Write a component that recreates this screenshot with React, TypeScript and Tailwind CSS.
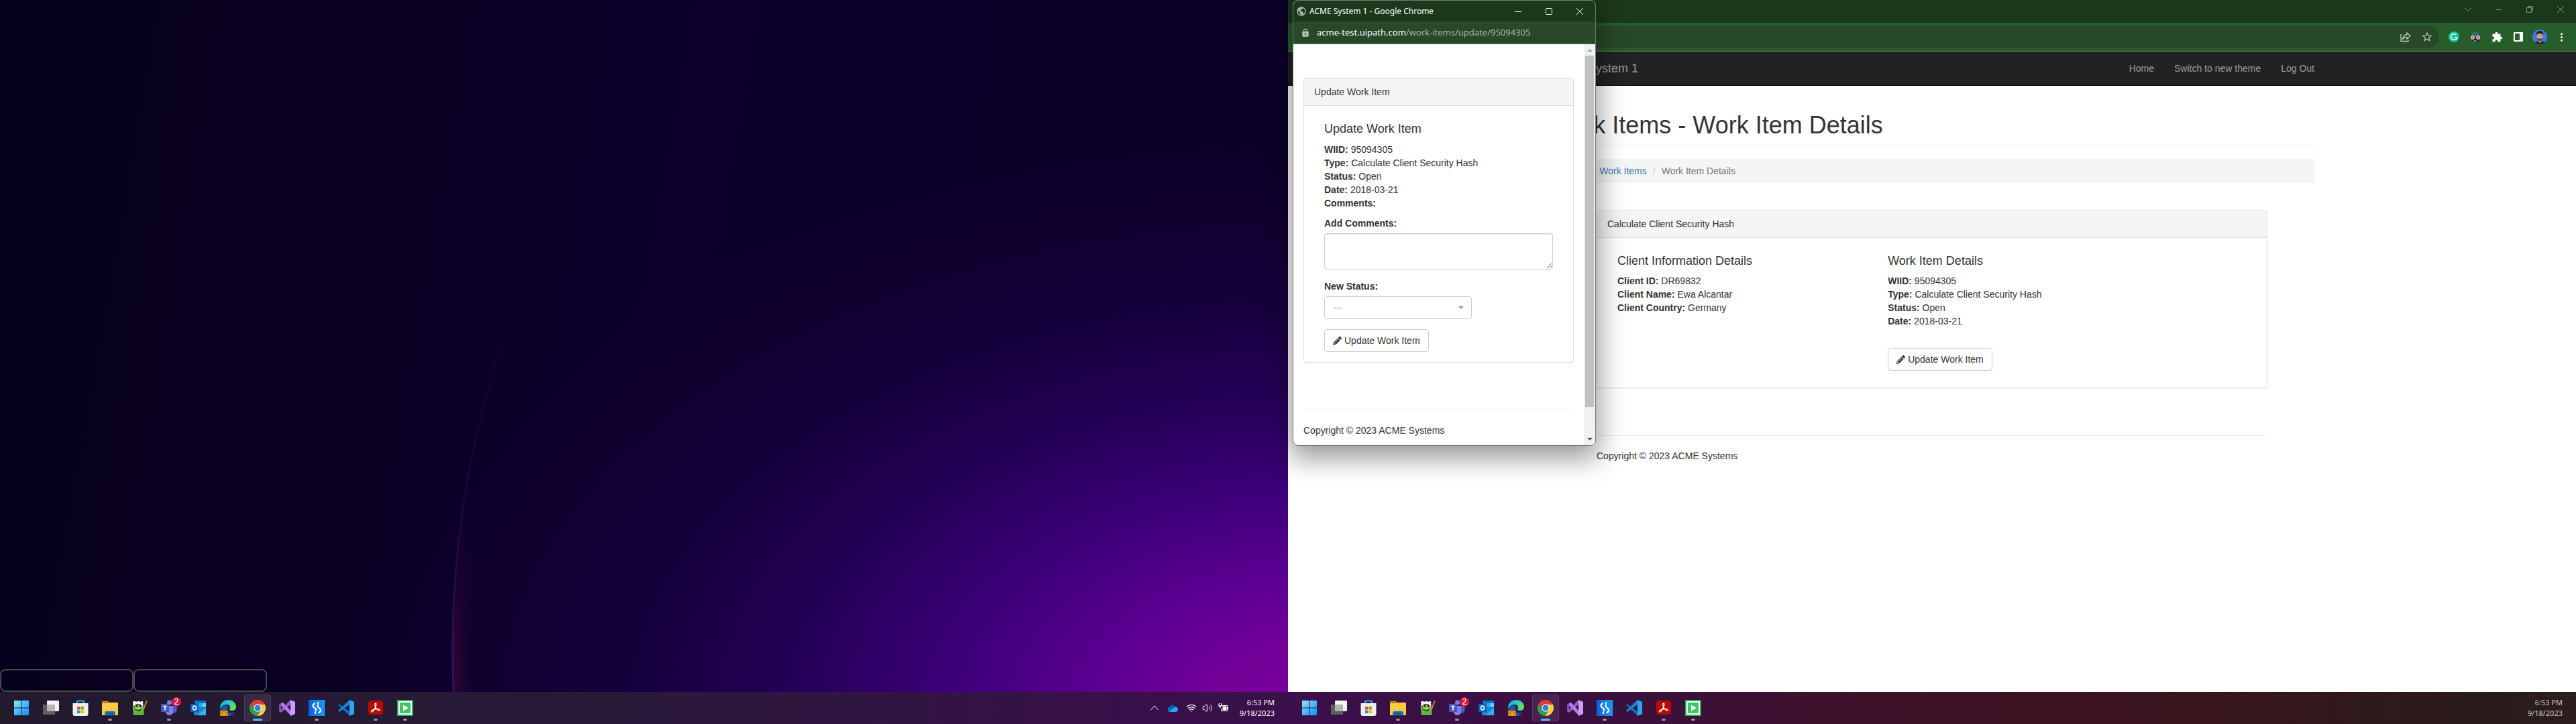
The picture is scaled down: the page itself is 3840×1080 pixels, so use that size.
import React from "react";
import { Volume2, Wifi } from "lucide-react";
import { MdExtension, MdLock, MdMoreVert, MdPublic, MdStarBorder } from "react-icons/md";
import { FaPencilAlt } from "react-icons/fa";

const UI = "font-['Noto_Sans',sans-serif]";

/* ---------- taskbar icons ---------- */

const StartIcon = () => (
  <svg viewBox="0 0 24 24" className="size-6">
    <defs>
      <linearGradient id="start" x1="0" y1="0" x2="1" y2="1">
        <stop offset="0" stopColor="#8ce4ff" />
        <stop offset="1" stopColor="#0a8ffb" />
      </linearGradient>
    </defs>
    <path fill="url(#start)" d="M1 1h10.500v10.500H1zM12.500 1H23v10.500H12.500zM1 12.500h10.500V23H1zM12.500 12.500H23V23H12.500z" />
  </svg>
);

const TaskViewIcon = () => (
  <svg viewBox="0 0 24 24" className="size-6">
    <rect x="6" y="1" width="18" height="16" rx="1" fill="#f4f4f4" />
    <rect x="0" y="7" width="18" height="15" rx="1" fill="#5f5f5f" />
    <rect x="6" y="7" width="12" height="10" fill="#b4b4b4" />
  </svg>
);

const StoreIcon = () => (
  <svg viewBox="0 0 24 24" className="size-6">
    <path d="M7 6V2.500A1 1 0 0 1 8 1.500h8a1 1 0 0 1 1 1V6" fill="none" stroke="#22b4f0" strokeWidth="2" />
    <path d="M.5 5h23v16a3 3 0 0 1-3 3h-17a3 3 0 0 1-3-3z" fill="#f0f0f0" />
    <path d="M7 10h4.500v4.500H7z" fill="#f25022" />
    <path d="M12.500 10H17v4.500h-4.500z" fill="#7fba00" />
    <path d="M7 15.500h4.500V20H7z" fill="#00a4ef" />
    <path d="M12.500 15.500H17V20h-4.500z" fill="#ffb900" />
  </svg>
);

const FolderIcon = () => (
  <svg viewBox="0 0 24 24" className="size-6">
    <path d="M0 3a1 1 0 0 1 1-1h8l2 2.500H0z" fill="#d9950c" />
    <path d="M0 5h9l1.500-1H23a1 1 0 0 1 1 1v17a1 1 0 0 1-1 1H1a1 1 0 0 1-1-1z" fill="#ffcb3d" />
    <path d="M4 19a2 2 0 0 1 2-2h12a2 2 0 0 1 2 2v4H4z" fill="#1277cb" />
    <path d="M7 20h10" stroke="#0b4f92" strokeWidth="1.500" />
  </svg>
);

const NotepadIcon = () => (
  <svg viewBox="0 0 24 24" className="size-6">
    <path d="M2 2h15l1 20H3z" fill="#f3f4ee" />
    <path d="M3 14l14-1 .6 8.500H3.500z" fill="#55c21e" />
    <ellipse cx="10" cy="11" rx="6" ry="4.500" fill="#8fd14a" stroke="#222" strokeWidth="1" />
    <circle cx="8" cy="9" r="1.500" fill="#222" />
    <circle cx="13" cy="9" r="1.500" fill="#222" />
    <path d="M7 15q4 3 7 0" stroke="#222" fill="none" />
    <path d="M23 1l-5 13" stroke="#c98a12" strokeWidth="2" />
    <path d="M3 2.500h14" stroke="#777" strokeDasharray="1 1" />
  </svg>
);

const TeamsIcon = () => (
  <svg viewBox="0 0 24 24" className="size-6">
    <circle cx="12.500" cy="4" r="3.500" fill="#7b83eb" />
    <circle cx="20" cy="6" r="2.500" fill="#5059c9" />
    <path d="M15 9h8.500v7a4.500 4.500 0 0 1-7 3z" fill="#5059c9" />
    <path d="M7 9h11v8.500a5.500 5.500 0 0 1-11 0z" fill="#7b83eb" />
    <rect x="0" y="6" width="12" height="12" rx="1" fill="#4b53bc" />
    <path d="M3 9.500h6M6 9.500v6" stroke="#fff" strokeWidth="1.700" />
  </svg>
);

const OutlookIcon = () => (
  <svg viewBox="0 0 24 24" className="size-6">
    <path d="M7 1h15a1 1 0 0 1 1 1v10H6V2a1 1 0 0 1 1-1z" fill="#1173c7" />
    <path d="M12 5h6v6h-6z" fill="#28a8ea" />
    <path d="M18 5h5v6h-5z" fill="#50d9ff" />
    <path d="M5 11l18 1v10a1 1 0 0 1-1 1H6a1 1 0 0 1-1-1z" fill="#1a86d6" />
    <path d="M23 12L10 23h12a1 1 0 0 0 1-1z" fill="#35b0ee" />
    <rect x="0" y="6" width="12" height="12" rx="1" fill="#0a64bd" />
    <ellipse cx="6" cy="12" rx="2.500" ry="3" fill="none" stroke="#fff" strokeWidth="1.600" />
  </svg>
);

const EdgeIcon = () => (
  <svg viewBox="0 0 24 24" className="size-6">
    <defs>
      <linearGradient id="edge" x1="0" y1="0" x2="1" y2=".5">
        <stop offset="0" stopColor="#1fa4e8" />
        <stop offset=".5" stopColor="#2bc3d2" />
        <stop offset="1" stopColor="#62e35a" />
      </linearGradient>
    </defs>
    <path d="M0 12c0 7 5 12 12 12 4 0 8-2 10-5-7 2-11-1-11-5 0-2 1-3 2-4C8 7 2 8 0 12z" fill="#0c59a4" />
    <path d="M0 12C0 5 5 0 12 0s12 5 12 10c0 4-3 6-6 6-3 0-4-1-4-2 0-1 1-1 1-3 0-2-2-4-5-4-5 0-9 3-10 6z" fill="url(#edge)" />
    <rect x="0" y="16" width="12" height="8" rx="1" fill="#e08a12" />
    <path d="M4 16v-1.500h4V16" stroke="#8a4d05" fill="none" />
    <path d="M0 19.500h12" stroke="#8a4d05" />
    <circle cx="6" cy="20" r="1.200" fill="#ffd36a" />
  </svg>
);

const ChromeIcon = () => (
  <svg viewBox="0 0 24 24" className="size-6">
    <path d="M12 6.500H22.670A12 12 0 0 1 11.430 24L16.760 14.750z" fill="#ffcd40" />
    <path d="M16.760 14.750L11.430 24A12 12 0 0 1 1.900 5.510L7.240 14.750z" fill="#2fa24c" />
    <path d="M7.240 14.750L1.900 5.510A12 12 0 0 1 22.670 6.500H12z" fill="#e33b2e" />
    <circle cx="12" cy="12" r="5.700" fill="#fff" />
    <circle cx="12" cy="12" r="4.500" fill="#2f7de9" />
  </svg>
);

const VisualStudioIcon = () => (
  <svg viewBox="0 0 24 24" className="size-6">
    <path d="M0 7l3-2v14l-3-2z" fill="#7a4fb0" />
    <path d="M17 0v7L3 19l-3-2z" fill="#8a5cc4" />
    <path d="M3 5l3-1 12 13v7L3 8.500z" fill="#b07be6" />
    <path d="M17 0l7 3v18l-7 3z" fill="#cf9bff" />
  </svg>
);

const StudioIcon = () => (
  <svg viewBox="0 0 24 24" className="size-6">
    <defs>
      <linearGradient id="studio">
        <stop offset="0" stopColor="#0a5fe0" />
        <stop offset="1" stopColor="#1a9cf0" />
      </linearGradient>
    </defs>
    <path d="M0 0h24v24H0z" fill="url(#studio)" />
    <path d="M9 5.500c-3.500 1.500-3 5 0 6.500 2.500 1.300 2.500 3 1.500 4.500" fill="none" stroke="#fff" strokeWidth="2.200" strokeLinecap="round" />
    <path d="M14 7.500c-1 1.500-1 3.200 1.500 4.500 3 1.500 3.500 5 0 7" fill="none" stroke="#fff" strokeWidth="2.200" strokeLinecap="round" />
    <circle cx="14" cy="4.500" r="1.400" fill="#fff" />
    <circle cx="10" cy="19.500" r="1.400" fill="#fff" />
  </svg>
);

const VsCodeIcon = () => (
  <svg viewBox="0 0 24 24" className="size-6">
    <path d="M0 8l2-1.500L18 18v6z" fill="#0a72bd" />
    <path d="M17 0v7L2 18l-2-2z" fill="#1586cf" />
    <path d="M17 0l7 3v18l-7 3z" fill="#2ba6f2" />
  </svg>
);

const AcrobatIcon = () => (
  <svg viewBox="0 0 24 24" className="size-6">
    <rect x="1" y="1" width="22" height="21" rx="4" fill="#b30b00" />
    <path
      d="M6 18c-2-1 2-4 6-4.500s7 .5 6 2-5-1-6.500-5-.5-5.500.5-5.500 1.500 3-1 7.500S7 18.500 6 18z"
      fill="none"
      stroke="#fff"
      strokeWidth="1.300"
    />
  </svg>
);

const AssistantIcon = () => (
  <svg viewBox="0 0 24 24" className="size-6">
    <path d="M0 0h24v24H0z" fill="#22b356" />
    <path d="M3 3h18v18H3z" fill="#3fc566" stroke="#fff" strokeWidth="2" />
    <path d="M9 7.500l8 4.500-8 4.500z" fill="#fff" />
  </svg>
);

type App = { name: string; icon: () => React.JSX.Element; open?: boolean; active?: boolean; badge?: string };

const apps: App[] = [
  { name: "Start", icon: StartIcon },
  { name: "Task View", icon: TaskViewIcon },
  { name: "Microsoft Store", icon: StoreIcon },
  { name: "File Explorer", icon: FolderIcon, open: true },
  { name: "Notepad++", icon: NotepadIcon },
  { name: "Teams", icon: TeamsIcon, open: true, badge: "2" },
  { name: "Outlook", icon: OutlookIcon },
  { name: "Edge", icon: EdgeIcon },
  { name: "Chrome", icon: ChromeIcon, active: true },
  { name: "Visual Studio", icon: VisualStudioIcon },
  { name: "UiPath Studio", icon: StudioIcon, open: true },
  { name: "Visual Studio Code", icon: VsCodeIcon },
  { name: "Acrobat Reader", icon: AcrobatIcon, open: true },
  { name: "UiPath Assistant", icon: AssistantIcon, open: true },
];

function TaskbarApps() {
  return (
    <div className="flex gap-1">
      {apps.map(({ name, icon: Icon, open, active, badge }) => (
        <button
          key={name}
          aria-label={name}
          className={`relative flex size-10 items-center justify-center rounded ${
            active ? "border border-white/10 bg-white/8" : ""
          }`}
        >
          <Icon />
          {open && <span className="absolute bottom-px h-[3px] w-[6px] rounded-full bg-[#9a96a0]" />}
          {active && <span className="absolute bottom-0 h-[3px] w-[14px] rounded-full bg-[#4cc2ff]" />}
          {badge && (
            <span
              className={`absolute top-1 right-0.5 flex size-[14px] items-center justify-center rounded-full bg-[#d81a3c] text-[12px] leading-none text-white ${UI}`}
            >
              {badge}
            </span>
          )}
        </button>
      ))}
    </div>
  );
}

function Clock({ className }: { className: string }) {
  return (
    <div className={`text-right text-[11px] leading-4 ${UI} ${className}`}>
      <div>6:53 PM</div>
      <div>9/18/2023</div>
    </div>
  );
}

/* ---------- left monitor ---------- */

function Desktop() {
  return (
    <section className="flex min-h-screen flex-col bg-[linear-gradient(100deg,#05001a_0%,#09001f_22%,#0c002c_50%,#0c0026_100%)]">
      <div className="relative flex flex-1 items-end bg-[radial-gradient(ellipse_76%_84%_at_103%_103%,#7c009c_0%,#740098_11%,#590090_25%,#3b0078_39%,#240056_55%,#17003e_70%,#100030_85%,transparent_100%)]">
        <svg
          viewBox="0 0 200 620"
          preserveAspectRatio="none"
          className="pointer-events-none absolute bottom-0 left-[34%] h-[60%] w-[12%]"
          aria-hidden="true"
        >
          <defs>
            <linearGradient id="ridge" x1="0" y1="0" x2="0" y2="1">
              <stop offset="0" stopColor="#2a1080" stopOpacity="0" />
              <stop offset=".6" stopColor="#24125c" stopOpacity=".5" />
              <stop offset="1" stopColor="#3a2068" stopOpacity=".8" />
            </linearGradient>
            <linearGradient id="glow" gradientUnits="userSpaceOnUse" x1="16" y1="0" x2="48" y2="0">
              <stop offset="0" stopColor="#3a0640" />
              <stop offset=".5" stopColor="#2c0432" stopOpacity=".7" />
              <stop offset="1" stopColor="#10004a" stopOpacity="0" />
            </linearGradient>
            <linearGradient id="fade" x1="0" y1="0" x2="0" y2="1">
              <stop offset=".45" stopColor="#000" />
              <stop offset="1" stopColor="#fff" />
            </linearGradient>
            <mask id="fadeMask">
              <rect width="200" height="620" fill="url(#fade)" />
            </mask>
          </defs>
          <path
            d="M20 620C12 420 40 220 112 0L112 0C62 220 44 420 50 620z"
            fill="url(#glow)"
            mask="url(#fadeMask)"
          />
          <path d="M20 620C12 420 40 220 112 0" fill="none" stroke="url(#ridge)" strokeWidth="2" />
        </svg>
        <div className="h-[34px] w-[199px] rounded-lg border-2 border-[#45474b]" />
        <div className="h-[34px] w-[199px] rounded-lg border-2 border-[#45474b]" />
      </div>
      <footer className="flex h-12 items-center justify-between bg-[linear-gradient(90deg,#231a2e,#281a38_45%,#3a104b_90%)] pr-5 pl-3">
        <TaskbarApps />
        <div className="flex items-center gap-3 text-white">
          <button aria-label="Show hidden icons">
            <svg viewBox="0 0 12 8" className="h-2 w-3" fill="none" stroke="currentColor">
              <path d="M.5 7L6 1l5.500 6" />
            </svg>
          </button>
          <svg viewBox="0 0 17 12" className="h-3 w-[17px]" role="img" aria-label="OneDrive">
            <path d="M4 12a4 4 0 0 1 0-7 5 5 0 0 1 9-.5A3.700 3.700 0 0 1 13.500 12z" fill="#0f78d4" />
            <path d="M1 6a4 4 0 0 1 3-1.500A5 5 0 0 1 13 4L6 9z" fill="#0a5cb0" />
            <path d="M4 12l6-6 4-1.200A3.700 3.700 0 0 1 13.500 12z" fill="#28a8ea" />
          </svg>
          <Wifi className="size-4" strokeWidth={2} />
          <Volume2 className="-mx-1 size-4" strokeWidth={1.5} />
          <svg viewBox="0 0 16 16" className="size-4" fill="none" stroke="currentColor">
            <path d="M6 4.500h7.500v8H4.500V9M14.500 7v3" />
            <path d="M7 6h5v5H7z" fill="currentColor" />
            <path d="M1 2v3h4V2M1.500 1v1M4.500 1v1M3 5v3" strokeWidth="1.300" />
          </svg>
          <Clock className="w-14" />
        </div>
      </footer>
    </section>
  );
}

/* ---------- shared page pieces ---------- */

function Field({ label, value }: { label: string; value?: string }) {
  return (
    <p>
      <b>{label}:</b> {value}
    </p>
  );
}

function UpdateButton() {
  return (
    <button className="flex h-[34px] items-center gap-1 rounded border border-[#cccccc] bg-white px-3 text-[#333333]">
      <FaPencilAlt className="size-[13px]" />
      Update Work Item
    </button>
  );
}

function Panel({ title, className, children }: { title: string; className: string; children: React.ReactNode }) {
  return (
    <section className="rounded border border-[#dddddd] bg-white shadow-[0_1px_1px_rgba(0,0,0,0.05)]">
      <h3 className="rounded-t border-b border-[#dddddd] bg-[#f5f5f5] px-[15px] py-[10px]">{title}</h3>
      <div className={className}>{children}</div>
    </section>
  );
}

const itemFields = [
  ["WIID", "95094305"],
  ["Type", "Calculate Client Security Hash"],
  ["Status", "Open"],
  ["Date", "2018-03-21"],
];

const clientFields = [
  ["Client ID", "DR69832"],
  ["Client Name", "Ewa Alcantar"],
  ["Client Country", "Germany"],
];

const PAGE = "font-['Liberation_Sans',Arial,sans-serif] text-[14px] leading-5 text-[#333333]";

/* ---------- popup window ---------- */

function Popup() {
  return (
    <div className="absolute top-0 left-[7px] flex w-[452px] flex-col overflow-hidden rounded-lg border border-[#6f7a70] bg-white shadow-[0_14px_40px_4px_rgba(0,0,0,0.42)]">
      <div className={`flex h-[31px] items-center bg-[#1b381b] pl-1 text-[12px] text-white ${UI}`}>
        <MdPublic className="size-4 text-[#b4bcb8]" />
        <span className="flex-1 pl-1">ACME System 1 - Google Chrome</span>
        <button aria-label="Minimize" className="flex w-[46px] justify-center">
          <svg viewBox="0 0 10 10" className="size-[10px]" stroke="currentColor">
            <path d="M0 5.500h10" />
          </svg>
        </button>
        <button aria-label="Maximize" className="flex w-[46px] justify-center">
          <svg viewBox="0 0 10 10" className="size-[10px]" fill="none" stroke="currentColor">
            <rect x=".5" y=".5" width="9" height="9" rx="1" />
          </svg>
        </button>
        <button aria-label="Close" className="flex w-[46px] justify-center">
          <svg viewBox="0 0 10 10" className="size-[10px]" stroke="currentColor">
            <path d="M0 0l10 10M10 0L0 10" />
          </svg>
        </button>
      </div>
      <div className={`flex h-[34px] items-center gap-2.5 border-b border-[#558058] bg-[#27492a] pl-[11px] text-[13px] ${UI}`}>
        <MdLock className="size-[14px] text-[#b9c2ba]" />
        <span className="text-[#a5b6a6]">
          <span className="text-white">acme-test.uipath.com</span>/work-items/update/95094305
        </span>
      </div>
      <div className="flex">
        <div className={`flex-1 px-[15px] pt-[50px] pb-3 ${PAGE}`}>
          <Panel title="Update Work Item" className="px-[30px] pt-6 pb-[15px]">
            <h4 className="mb-[11px] text-[18px]">Update Work Item</h4>
            {itemFields.map(([label, value]) => (
              <Field key={label} label={label} value={value} />
            ))}
            <Field label="Comments" />
            <form className="mt-[10px]" onSubmit={(e) => e.preventDefault()}>
              <label htmlFor="comments" className="mb-[5px] block font-bold">
                Add Comments:
              </label>
              <textarea
                id="comments"
                className="mb-[15px] block h-[54px] w-full resize rounded border border-[#cccccc] px-3 py-1.5 shadow-[inset_0_1px_1px_rgba(0,0,0,0.075)]"
              />
              <label htmlFor="status" className="mb-[5px] block font-bold">
                New Status:
              </label>
              <div className="relative mb-[15px] w-[220px]">
                <select
                  id="status"
                  className="block h-[34px] w-full appearance-none rounded border border-[#cccccc] bg-white px-3 text-[#999999]"
                >
                  <option>---</option>
                </select>
                <svg viewBox="0 0 8 4" className="pointer-events-none absolute top-[15px] right-3 h-1 w-2" fill="#999999">
                  <path d="M0 0h8L4 4z" />
                </svg>
              </div>
              <UpdateButton />
            </form>
          </Panel>
          <footer className="mt-[70px] border-t border-[#eeeeee] pt-5">Copyright © 2023 ACME Systems</footer>
        </div>
        <div className="flex w-[17px] flex-col items-center justify-between bg-[#f1f1f1] py-[7px]" aria-hidden="true">
          <svg viewBox="0 0 8 4" className="h-1 w-2" fill="#a3a3a3">
            <path d="M0 4h8L4 0z" />
          </svg>
          <div className="mt-1.5 mb-[46px] w-[13px] flex-1 bg-[#c1c1c1]" />
          <svg viewBox="0 0 8 4" className="h-1 w-2" fill="#505050">
            <path d="M0 0h8L4 4z" />
          </svg>
        </div>
      </div>
    </div>
  );
}

/* ---------- main browser window ---------- */

function Avatar() {
  return (
    <svg viewBox="0 0 22 22" className="size-[22px] rounded-full" role="img" aria-label="Profile">
      <path d="M0 0h22v22H0z" fill="#3a78dc" />
      <path d="M3 22c1-4 4-5 8-5s7 1 8 5z" fill="#2a2532" />
      <path d="M8.500 14h5v4L11 20l-2.500-2z" fill="#c08d78" />
      <ellipse cx="11" cy="10" rx="4.500" ry="6" fill="#d9a791" />
      <path d="M6 9C5 4 8 2 11 2s6 2 5 7c-1-2-2-3-5-3S7 7 6 9z" fill="#231c1e" />
      <path d="M7 12c1 4 2 5 4 5s3-1 4-5c-1 2-2 1.500-4 1.500S8 14 7 12z" fill="#5a3c34" />
      <path d="M8 9h2M12 9h2" stroke="#33231f" />
    </svg>
  );
}

function BrowserChrome() {
  return (
    <header>
      <div className="flex h-[34px] items-start justify-end bg-[#1b381b] text-[#7f937f]">
        {[
          ["Search tabs", "M0 2.500l5 5 5-5"],
          ["Minimize window", "M0 5.500h10"],
          ["Restore window", "M.5 2.500h7v7h-7zM2.500 2.500V1a.5.5 0 0 1 .5-.5h6a.5.5 0 0 1 .5.5v6a.5.5 0 0 1-.5.5H7.500"],
          ["Close window", "M0 0l10 10M10 0L0 10"],
        ].map(([label, d]) => (
          <button key={label} aria-label={label} className="flex h-7 w-[46px] items-center justify-center">
            <svg viewBox="0 0 10 10" className="size-[10px]" fill="none" stroke="currentColor">
              <path d={d} />
            </svg>
          </button>
        ))}
      </div>
      <div className="flex h-[43px] items-center border-b border-[#558058] bg-[#275d2b] pr-[6px] pl-28">
        <div className="flex h-[34px] flex-1 items-center gap-0 rounded-full bg-[#27492a] pr-[2px] text-[#c3cdc4]">
          <input aria-label="Address" className="h-full min-w-0 flex-1 rounded-full bg-transparent px-4 outline-none" />
          <button aria-label="Share" className="flex w-8 justify-center">
            <svg viewBox="0 0 16 16" className="size-4" fill="none" stroke="currentColor" strokeWidth="1.300">
              <path d="M1 4v10.500h11V12" />
              <path d="M10 2l5 4.500-5 4.500V8.500C7 8.500 5 9.500 3.500 12 4 8 6 5 10 4.500z" />
            </svg>
          </button>
          <button aria-label="Bookmark" className="flex w-8 justify-center">
            <MdStarBorder className="size-[18px]" />
          </button>
        </div>
        <div className="flex items-center pl-1.5 text-white">
          <button aria-label="Grammarly" className="flex w-8 justify-center">
            <svg viewBox="0 0 16 16" className="size-4">
              <circle cx="8" cy="8" r="8" fill="#15c39a" />
              <path d="M11.500 5A4.500 4.500 0 1 0 12.300 9.500M8.500 9h3.800v3" fill="none" stroke="#fff" strokeWidth="1.400" />
            </svg>
          </button>
          <button aria-label="Robot extension" className="flex w-8 justify-center">
            <svg viewBox="0 0 16 16" className="size-4">
              <path d="M3 7C2 3 4 1 8 1s6 2 5 6z" fill="#2f6f86" />
              <path d="M2 8h12l-1 7H3z" fill="#1c1c30" />
              <path d="M5 14h6" stroke="#5f9cb8" strokeWidth="2" strokeDasharray="2 1" />
              <circle cx="4" cy="9" r="2.500" fill="#f05a36" stroke="#fff" />
              <circle cx="12" cy="9" r="2.500" fill="#f05a36" stroke="#fff" />
            </svg>
          </button>
          <button aria-label="Extensions" className="flex w-8 justify-center">
            <MdExtension className="size-[17px]" />
          </button>
          <button aria-label="Side panel" className="flex w-8 justify-center">
            <svg viewBox="0 0 14 14" className="size-[14px]">
              <path d="M0 0h14v14H0zM2 2v10h7V2z" fill="currentColor" fillRule="evenodd" />
            </svg>
          </button>
          <button aria-label="Profile menu" className="flex w-8 justify-center">
            <Avatar />
          </button>
          <button aria-label="Menu" className="flex w-8 justify-center">
            <MdMoreVert className="size-[19px]" />
          </button>
        </div>
      </div>
    </header>
  );
}

function BrowserWindow() {
  return (
    <section className="flex min-h-screen flex-col bg-white">
      <div className="relative flex flex-1 flex-col">
        <BrowserChrome />
        <main className={PAGE}>
          <nav className="border-b border-[#080808] bg-[#222222] text-[#9d9d9d]">
            <div className="mx-auto flex h-[50px] max-w-[1140px] items-center justify-between">
              <a href="#top" className="text-[18px]">
                ACME System 1
              </a>
              <div className="flex gap-[30px]">
                <a href="#home">Home</a>
                <a href="#theme">Switch to new theme</a>
                <a href="#logout">Log Out</a>
              </div>
            </div>
          </nav>
          <div className="mx-auto max-w-[1140px] pt-[39px]">
            <h1 className="border-b border-[#eeeeee] pb-[9px] text-[36px] leading-10">Work Items - Work Item Details</h1>
            <ol className="mt-5 flex gap-[9px] rounded bg-[#f5f5f5] px-[15px] py-2">
              <li>
                <a href="#home" className="text-[#337ab7]">
                  Home
                </a>
              </li>
              <li className="text-[#cccccc]">/</li>
              <li>
                <a href="#items" className="text-[#337ab7]">
                  Work Items
                </a>
              </li>
              <li className="text-[#cccccc]">/</li>
              <li className="text-[#777777]">Work Item Details</li>
            </ol>
          </div>
          <div className="mx-auto max-w-[1000px] pt-10">
            <Panel title="Calculate Client Security Hash" className="grid grid-cols-5 px-[30px] pt-6 pb-[25px]">
              <div className="col-span-2 pr-8">
                <h4 className="mb-[10px] text-[18px]">Client Information Details</h4>
                {clientFields.map(([label, value]) => (
                  <Field key={label} label={label} value={value} />
                ))}
              </div>
              <div className="col-span-3 pl-7">
                <h4 className="mb-[10px] text-[18px]">Work Item Details</h4>
                {itemFields.map(([label, value]) => (
                  <Field key={label} label={label} value={value} />
                ))}
                <div className="mt-[30px]">
                  <UpdateButton />
                </div>
              </div>
            </Panel>
            <footer className="mt-[70px] border-t border-[#eeeeee] pt-5">Copyright © 2023 ACME Systems</footer>
          </div>
        </main>
        <Popup />
      </div>
      <footer className="flex h-12 items-center justify-between bg-[linear-gradient(90deg,#3b104c,#3a103f_25%,#3f1129_45%,#3a151d_70%,#2a1b1b_92%,#2b1d1e)] pr-5 pl-3">
        <TaskbarApps />
        <Clock className="text-[#c9c5c6]" />
      </footer>
    </section>
  );
}

export default function App() {
  return (
    <div className="grid min-h-screen grid-cols-2">
      <Desktop />
      <BrowserWindow />
    </div>
  );
}
